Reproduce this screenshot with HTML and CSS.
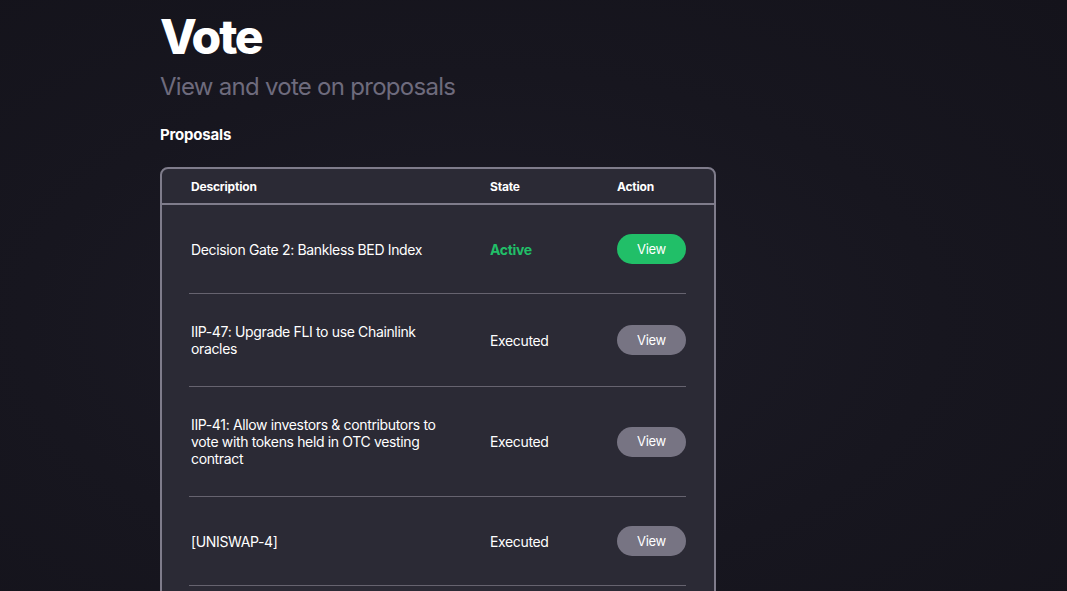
FILE: index.html
```html
<!DOCTYPE html>
<html>
<head>
<meta charset="utf-8">
<link rel="stylesheet" href="styles.css">
</head>
<body>
<main class="page">
  <h1 class="title">Vote</h1>
  <p class="subtitle">View and vote on proposals</p>
  <h2 class="section">Proposals</h2>
  <div class="table">
    <div class="head">
      <div class="c-desc">Description</div>
      <div class="c-state">State</div>
      <div class="c-action">Action</div>
    </div>
    <div class="body">
      <div class="row">
        <div class="c-desc">Decision Gate 2: Bankless BED Index</div>
        <div class="c-state active">Active</div>
        <div class="c-action"><span class="btn green">View</span></div>
      </div>
      <div class="row">
        <div class="c-desc">IIP-47: Upgrade FLI to use Chainlink oracles</div>
        <div class="c-state">Executed</div>
        <div class="c-action"><span class="btn">View</span></div>
      </div>
      <div class="row">
        <div class="c-desc">IIP-41: Allow investors &amp; contributors to vote with tokens held in OTC vesting contract</div>
        <div class="c-state">Executed</div>
        <div class="c-action"><span class="btn">View</span></div>
      </div>
      <div class="row">
        <div class="c-desc">[UNISWAP-4]</div>
        <div class="c-state">Executed</div>
        <div class="c-action"><span class="btn">View</span></div>
      </div>
    </div>
  </div>
</main>
</body>
</html>
```

FILE: styles.css
```css
html, body {
  margin: 0;
  padding: 0;
  height: 100%;
  overflow: hidden;
}
body {
  background: radial-gradient(ellipse at 45% 55%, #1d1c27 0%, #17161f 55%, #14131b 100%);
  font-family: Inter, "Liberation Sans", sans-serif;
  color: #ffffff;
}
.page {
  width: 556px;
  margin-left: 160px;
  padding-top: 8px;
}
.title {
  margin: 0;
  font-size: 48px;
  font-weight: 800;
  letter-spacing: -2.2px;
  line-height: 58px;
}
.subtitle {
  margin: 6px 0 0;
  font-size: 24px;
  font-weight: 400;
  color: #6e6b7d;
  letter-spacing: -0.72px;
  line-height: 30px;
}
.section {
  margin: 23px 0 0;
  font-size: 15px;
  font-weight: 700;
  letter-spacing: -0.2px;
  line-height: 20px;
}
.table {
  margin-top: 22px;
  border: 2px solid #7f7c8b;
  border-radius: 8px;
  background: #2b2a35;
  width: 552px;
  padding-bottom: 60px;
}
.head {
  display: grid;
  grid-template-columns: 299px 127px 1fr;
  padding: 0 28px 0 29px;
  height: 34px;
  align-items: center;
  border-bottom: 2px solid #7f7c8b;
  font-size: 12px;
  font-weight: 700;
  letter-spacing: -0.2px;
}
.body {
  padding: 0 28px 0 27px;
}
.row {
  display: grid;
  grid-template-columns: 301px 127px 1fr;
  align-items: center;
  padding: 29px 0;
  border-bottom: 1px solid #66636f;
  font-size: 14px;
  line-height: 17px;
  letter-spacing: -0.35px;
}
.row .c-desc {
  padding-left: 2px;
  padding-right: 40px;
}
.active {
  color: #21bf68;
  font-weight: 700;
}
.c-action {
  display: flex;
  justify-content: flex-end;
}
.head .c-action { justify-content: flex-start; }
.btn {
  display: inline-flex;
  align-items: center;
  justify-content: center;
  width: 69px;
  height: 30px;
  border-radius: 15px;
  background: #777483;
  color: #ffffff;
  font-size: 13px;
  letter-spacing: -0.3px;
}
.btn.green { background: #21bf68; }
```
